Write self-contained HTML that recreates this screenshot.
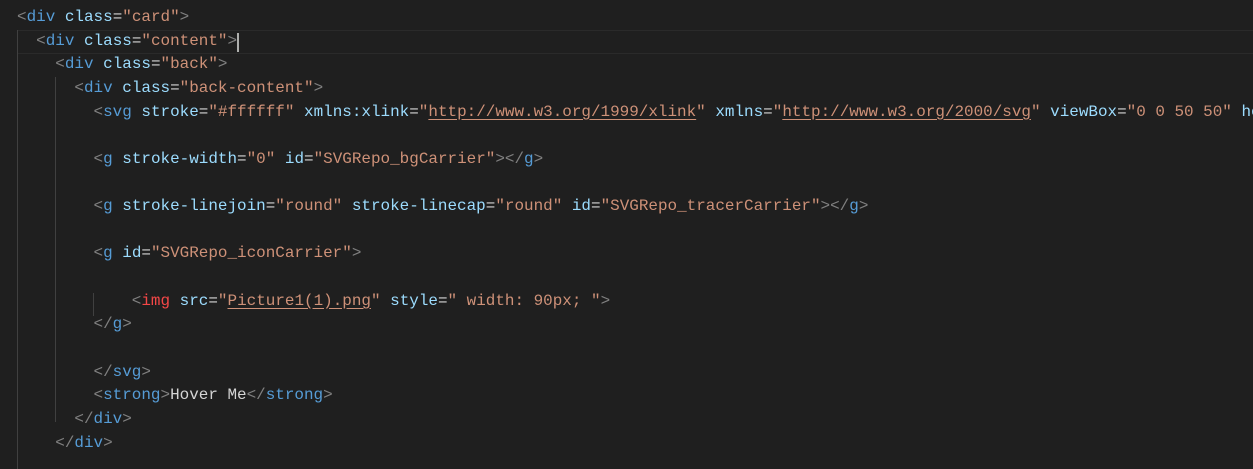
<!DOCTYPE html>
<html><head><meta charset="utf-8"><style>
html,body{margin:0;padding:0;background:#1f1f1f;width:1253px;height:469px;overflow:hidden}
#ed{position:absolute;left:17px;top:6px;font-family:"Liberation Mono",monospace;font-size:15.95px;line-height:23.65px;color:#d4d4d4}
.l{height:23.65px;white-space:pre}
.p{color:#808080}.t{color:#569cd6}.a{color:#9cdcfe}.s{color:#ce9178}.r{color:#f44747}
.u{text-decoration:underline;text-underline-offset:3px}
.cur{position:absolute;left:17px;top:30px;width:1236px;height:22px;border-top:1px solid #2a2a2a;border-bottom:1px solid #2a2a2a}
.g{position:absolute;width:1px;background:#404040}
.c{position:absolute;left:237px;top:33px;width:2px;height:19px;background:#aeafad}
</style></head><body>
<div class="cur"></div>
<div class="g" style="left:17px;top:30px;height:439px"></div>
<div class="g" style="left:55px;top:77px;height:345px"></div>
<div class="g" style="left:93px;top:293px;height:23px"></div>
<div class="c"></div>
<div id="ed"><div class="l"><span class="p">&lt;</span><span class="t">div</span> <span class="a">class</span>=<span class="s">"card"</span><span class="p">&gt;</span></div><div class="l">  <span class="p">&lt;</span><span class="t">div</span> <span class="a">class</span>=<span class="s">"content"</span><span class="p">&gt;</span></div><div class="l">    <span class="p">&lt;</span><span class="t">div</span> <span class="a">class</span>=<span class="s">"back"</span><span class="p">&gt;</span></div><div class="l">      <span class="p">&lt;</span><span class="t">div</span> <span class="a">class</span>=<span class="s">"back-content"</span><span class="p">&gt;</span></div><div class="l">        <span class="p">&lt;</span><span class="t">svg</span> <span class="a">stroke</span>=<span class="s">"#ffffff"</span> <span class="a">xmlns:xlink</span>=<span class="s">"<span class="u">http://www.w3.org/1999/xlink</span>"</span> <span class="a">xmlns</span>=<span class="s">"<span class="u">http://www.w3.org/2000/svg</span>"</span> <span class="a">viewBox</span>=<span class="s">"0 0 50 50"</span> <span class="a">height</span></div><div class="l"></div><div class="l">        <span class="p">&lt;</span><span class="t">g</span> <span class="a">stroke-width</span>=<span class="s">"0"</span> <span class="a">id</span>=<span class="s">"SVGRepo_bgCarrier"</span><span class="p">&gt;&lt;/</span><span class="t">g</span><span class="p">&gt;</span></div><div class="l"></div><div class="l">        <span class="p">&lt;</span><span class="t">g</span> <span class="a">stroke-linejoin</span>=<span class="s">"round"</span> <span class="a">stroke-linecap</span>=<span class="s">"round"</span> <span class="a">id</span>=<span class="s">"SVGRepo_tracerCarrier"</span><span class="p">&gt;&lt;/</span><span class="t">g</span><span class="p">&gt;</span></div><div class="l"></div><div class="l">        <span class="p">&lt;</span><span class="t">g</span> <span class="a">id</span>=<span class="s">"SVGRepo_iconCarrier"</span><span class="p">&gt;</span></div><div class="l"></div><div class="l">            <span class="p">&lt;</span><span class="r">img</span> <span class="a">src</span>=<span class="s">"<span class="u">Picture1(1).png</span>"</span> <span class="a">style</span>=<span class="s">" width: 90px; "</span><span class="p">&gt;</span></div><div class="l">        <span class="p">&lt;/</span><span class="t">g</span><span class="p">&gt;</span></div><div class="l"></div><div class="l">        <span class="p">&lt;/</span><span class="t">svg</span><span class="p">&gt;</span></div><div class="l">        <span class="p">&lt;</span><span class="t">strong</span><span class="p">&gt;</span>Hover Me<span class="p">&lt;/</span><span class="t">strong</span><span class="p">&gt;</span></div><div class="l">      <span class="p">&lt;/</span><span class="t">div</span><span class="p">&gt;</span></div><div class="l">    <span class="p">&lt;/</span><span class="t">div</span><span class="p">&gt;</span></div></div>
</body></html>
